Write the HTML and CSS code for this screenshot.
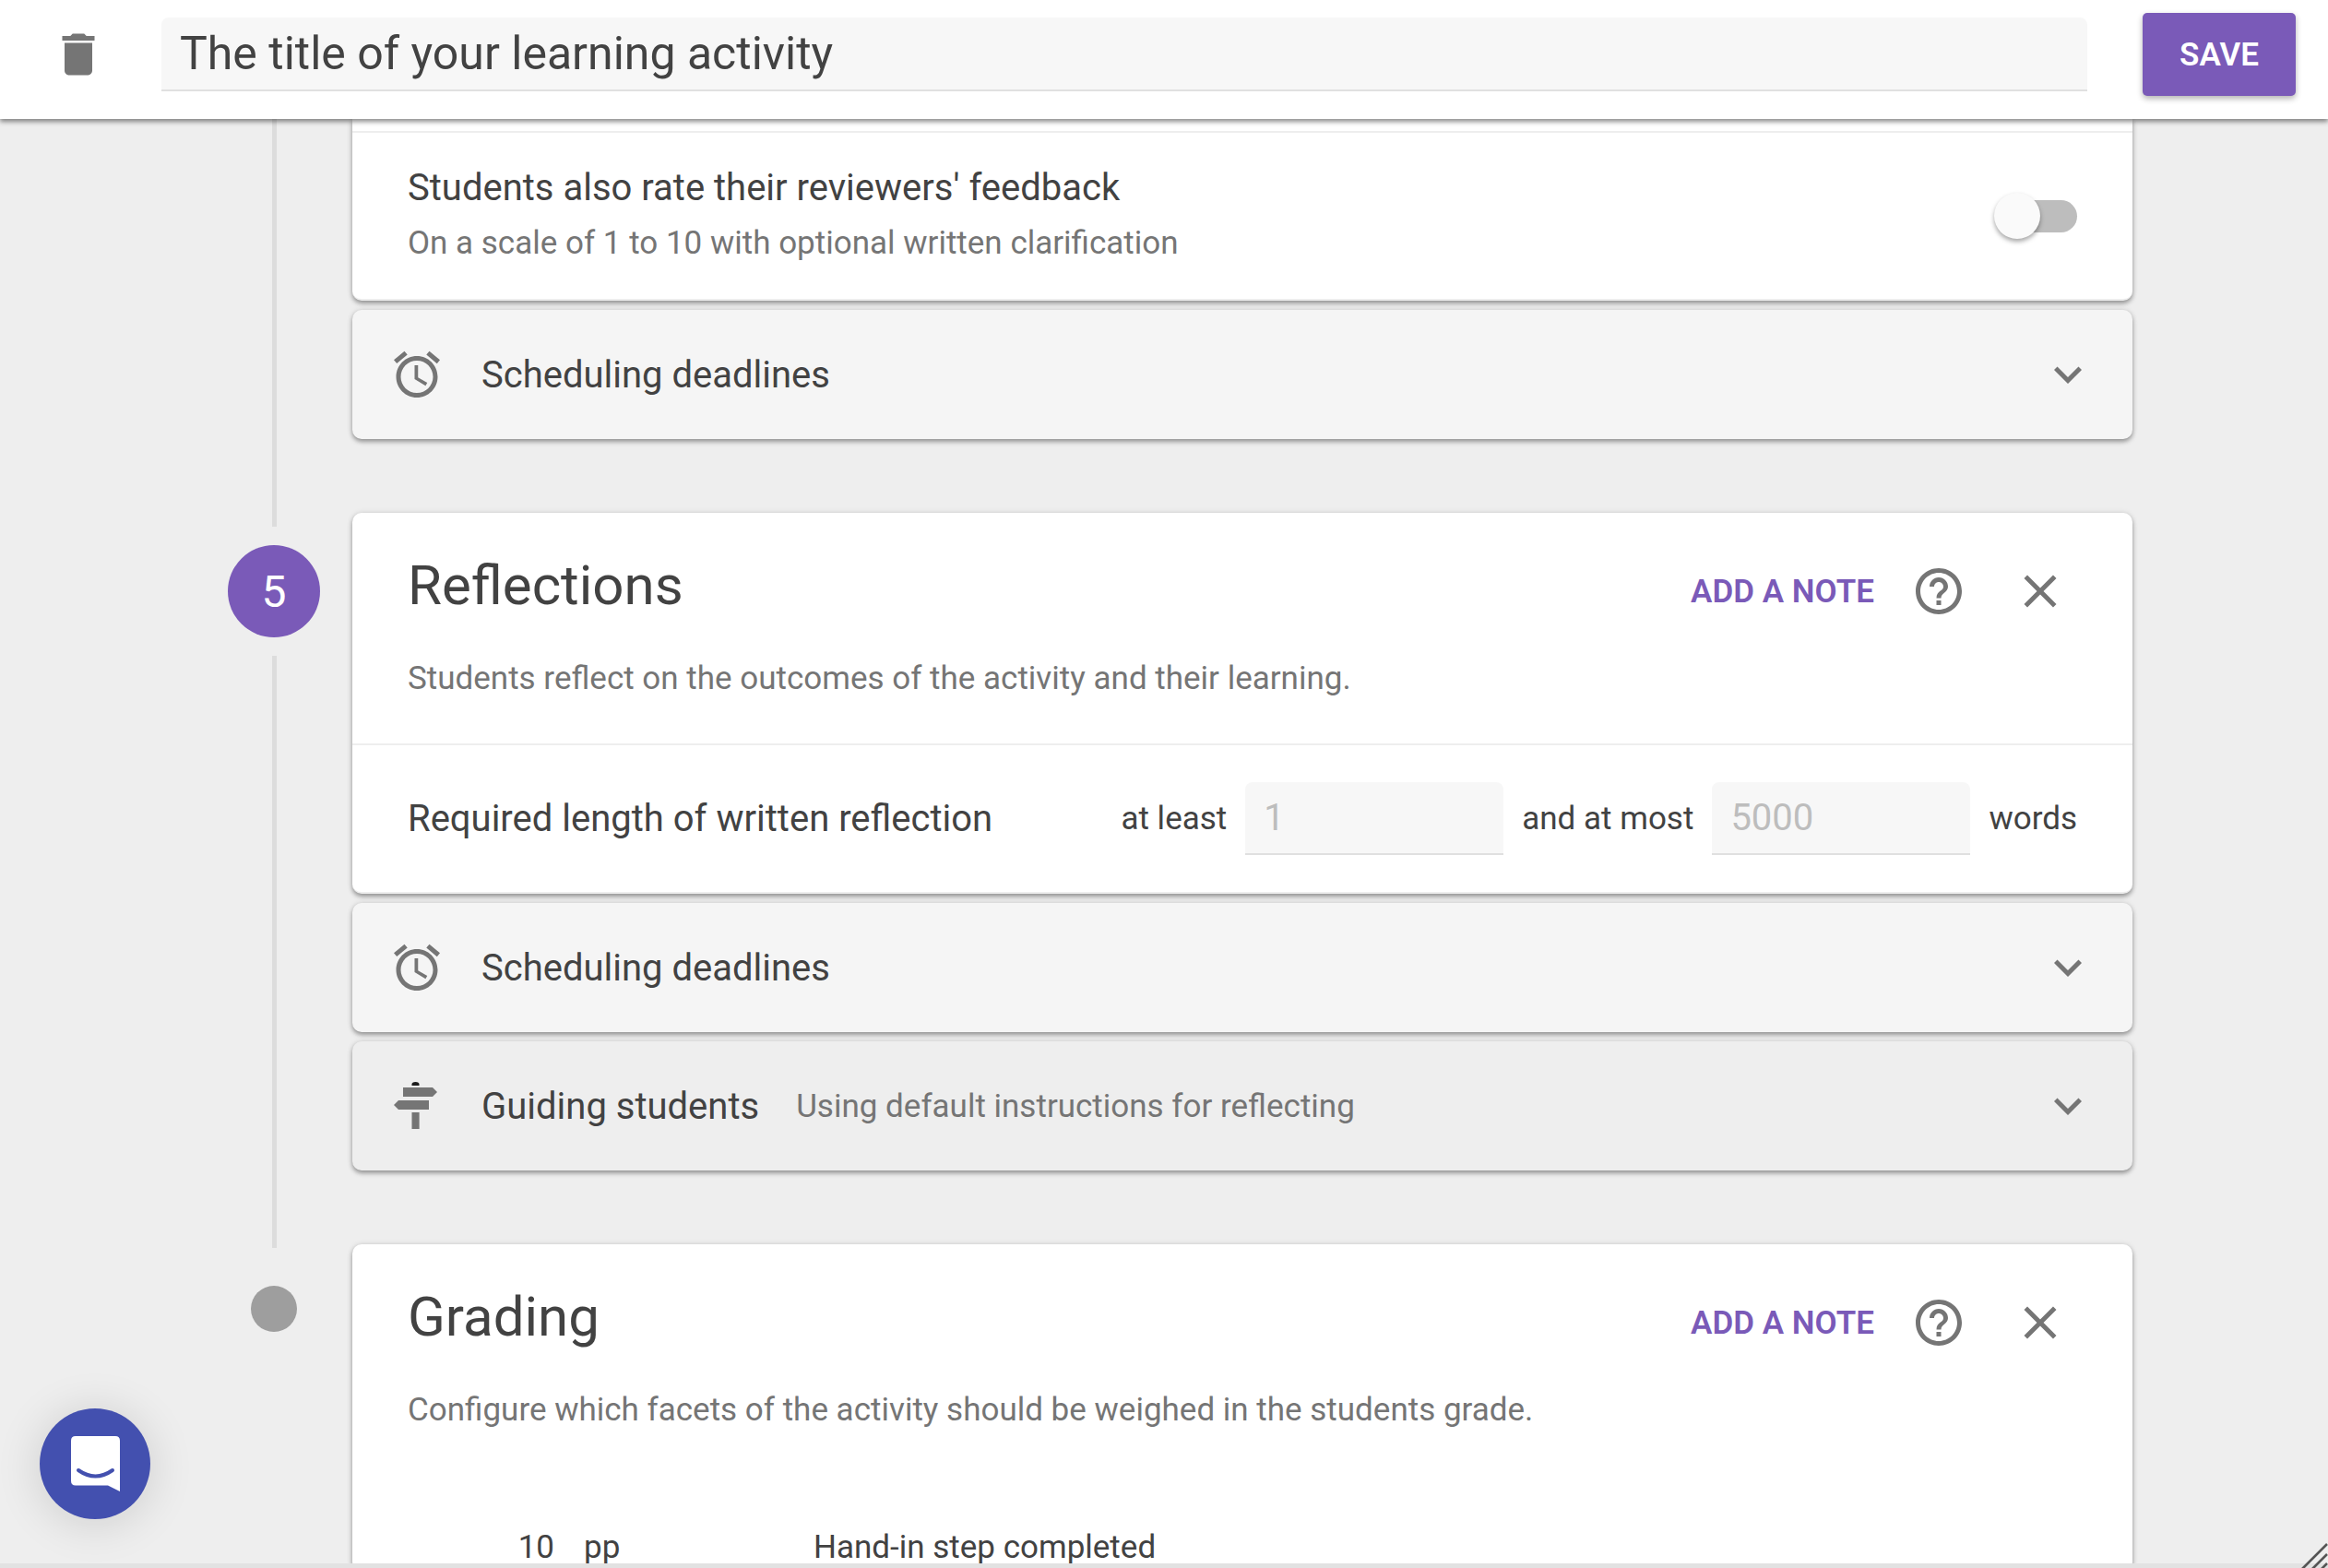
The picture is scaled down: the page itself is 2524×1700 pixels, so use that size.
FILE: index.html
```html
<!DOCTYPE html>
<html lang="en">
<head>
<meta charset="utf-8">
<title>The title of your learning activity</title>
<link rel="stylesheet" href="styles.css">
</head>
<body>
<header class="topbar">
  <svg class="icon trash" viewBox="0 0 24 24"><path d="M6 19c0 1.1.9 2 2 2h8c1.1 0 2-.9 2-2V7H6v12zM19 4h-3.5l-1-1h-5l-1 1H5v2h14V4z"/></svg>
  <input class="title-input" type="text" value="The title of your learning activity" aria-label="Title">
  <button class="save" type="button">SAVE</button>
</header>
<main class="page">
  <section class="step step-cont">
    <div class="rail"><span class="line grow"></span></div>
    <div class="cards">
      <div class="card card-cut">
        <div class="option">
          <div>
            <div class="row-title">Students also rate their reviewers' feedback</div>
            <div class="row-sub">On a scale of 1 to 10 with optional written clarification</div>
          </div>
          <div class="toggle"><span class="thumb"></span></div>
        </div>
      </div>
      <div class="fold">
        <svg class="icon" viewBox="0 0 24 24"><path d="M22 5.72l-4.6-3.86-1.29 1.53 4.6 3.86L22 5.72zM7.88 3.39L6.6 1.86 2 5.71l1.29 1.53 4.59-3.85zM12.5 8H11v6l4.75 2.85.75-1.23-4-2.37V8zM12 4c-4.97 0-9 4.03-9 9s4.03 9 9 9 9-4.03 9-9-4.03-9-9-9zm0 16c-3.87 0-7-3.13-7-7s3.13-7 7-7 7 3.13 7 7-3.13 7-7 7z"/></svg>
        <span class="fold-title">Scheduling deadlines</span>
        <svg class="icon chevron" viewBox="0 0 24 24"><path d="M16.59 8.59L12 13.17 7.41 8.59 6 10l6 6 6-6z"/></svg>
      </div>
    </div>
  </section>

  <section class="step">
    <div class="rail">
      <span class="line stub"></span>
      <span class="badge">5</span>
      <span class="line grow"></span>
    </div>
    <div class="cards">
      <div class="card">
        <div class="card-head">
          <div class="head-top">
            <h2 class="card-title">Reflections</h2>
            <div class="actions">
              <span class="note">ADD A NOTE</span>
              <svg class="icon" viewBox="0 0 24 24"><path d="M11 18h2v-2h-2v2zm1-16C6.48 2 2 6.48 2 12s4.48 10 10 10 10-4.48 10-10S17.52 2 12 2zm0 18c-4.41 0-8-3.59-8-8s3.59-8 8-8 8 3.59 8 8-3.59 8-8 8zm0-14c-2.21 0-4 1.79-4 4h2c0-1.1.9-2 2-2s2 .9 2 2c0 2-3 1.75-3 5h2c0-2.25 3-2.5 3-5 0-2.21-1.79-4-4-4z"/></svg>
              <svg class="icon" viewBox="0 0 24 24"><path d="M19 6.41L17.59 5 12 10.59 6.41 5 5 6.41 10.59 12 5 17.59 6.41 19 12 13.41 17.59 19 19 17.59 13.41 12z"/></svg>
            </div>
          </div>
          <p class="card-desc">Students reflect on the outcomes of the activity and their learning.</p>
        </div>
        <div class="length-row">
          <span class="row-title length-label">Required length of written reflection</span>
          <span class="inline-label">at least</span>
          <input class="num" type="text" value="1" aria-label="At least">
          <span class="inline-label">and at most</span>
          <input class="num" type="text" value="5000" aria-label="At most">
          <span class="inline-label">words</span>
        </div>
      </div>
      <div class="fold">
        <svg class="icon" viewBox="0 0 24 24"><path d="M22 5.72l-4.6-3.86-1.29 1.53 4.6 3.86L22 5.72zM7.88 3.39L6.6 1.86 2 5.71l1.29 1.53 4.59-3.85zM12.5 8H11v6l4.75 2.85.75-1.23-4-2.37V8zM12 4c-4.97 0-9 4.03-9 9s4.03 9 9 9 9-4.03 9-9-4.03-9-9-9zm0 16c-3.87 0-7-3.13-7-7s3.13-7 7-7 7 3.13 7 7-3.13 7-7 7z"/></svg>
        <span class="fold-title">Scheduling deadlines</span>
        <svg class="icon chevron" viewBox="0 0 24 24"><path d="M16.59 8.59L12 13.17 7.41 8.59 6 10l6 6 6-6z"/></svg>
      </div>
      <div class="fold fold-dark">
        <svg class="icon" viewBox="0 0 60 60">
          <path class="cap" d="M24.5 8V6.5Q24.5 4 28.5 4T32.500 6.500V8z"/>
          <path d="M15 10H47L52 15 47 20H15z"/>
          <path d="M10 24H43V34H10L5 29z"/>
          <path d="M24.500 37H32.600V55H24.500z"/>
        </svg>
        <span class="fold-title">Guiding students</span>
        <span class="fold-sub">Using default instructions for reflecting</span>
        <svg class="icon chevron" viewBox="0 0 24 24"><path d="M16.59 8.59L12 13.17 7.41 8.59 6 10l6 6 6-6z"/></svg>
      </div>
    </div>
  </section>

  <section class="step step-last">
    <div class="rail">
      <span class="line tail"></span>
      <span class="dot"></span>
    </div>
    <div class="cards">
      <div class="card">
        <div class="card-head card-head-open">
          <div class="head-top">
            <h2 class="card-title">Grading</h2>
            <div class="actions">
              <span class="note">ADD A NOTE</span>
              <svg class="icon" viewBox="0 0 24 24"><path d="M11 18h2v-2h-2v2zm1-16C6.48 2 2 6.48 2 12s4.48 10 10 10 10-4.48 10-10S17.52 2 12 2zm0 18c-4.41 0-8-3.59-8-8s3.59-8 8-8 8 3.59 8 8-3.59 8-8 8zm0-14c-2.21 0-4 1.79-4 4h2c0-1.1.9-2 2-2s2 .9 2 2c0 2-3 1.75-3 5h2c0-2.25 3-2.5 3-5 0-2.21-1.79-4-4-4z"/></svg>
              <svg class="icon" viewBox="0 0 24 24"><path d="M19 6.41L17.59 5 12 10.59 6.41 5 5 6.41 10.59 12 5 17.59 6.41 19 12 13.41 17.59 19 19 17.59 13.41 12z"/></svg>
            </div>
          </div>
          <p class="card-desc">Configure which facets of the activity should be weighed in the students grade.</p>
        </div>
        <div class="grade-row">
          <span class="grade-num">10</span>
          <span>pp</span>
          <span>Hand-in step completed</span>
        </div>
      </div>
    </div>
  </section>
</main>
<div class="chat">
  <svg class="chat-icon" viewBox="0 0 53 60">
    <path class="chat-bubble" d="M5 0H48Q53 0 53 5V60L40 53.500H5Q0 53.500 0 48.500V5Q0 0 5 0z"/>
    <path class="chat-smile" d="M8 37Q26.500 50 45 37"/>
  </svg>
</div>
<svg class="grip" viewBox="0 0 30 30"><path d="M2 29L29 2M13 29L29 13M23 29L29 23"/></svg>
</body>
</html>
```

FILE: styles.css
```css
* { box-sizing: border-box; }
html, body { margin: 0; padding: 0; }
body {
  width: 2524px;
  height: 1700px;
  display: flex;
  flex-direction: column;
  overflow: hidden;
  background: #eeeeee;
  border-bottom: 5px solid #e2e2e2;
  font-family: Roboto, "Liberation Sans", sans-serif;
  color: #424242;
}
.icon { width: 60px; height: 60px; flex: none; display: block; fill: #757575; }
.cap { fill: #1c1c1c; }

.topbar {
  position: relative;
  z-index: 2;
  height: 129px;
  flex: none;
  display: flex;
  align-items: center;
  padding: 0 35px 11px 55px;
  background: #fff;
  box-shadow: 0 3px 5px rgba(0, 0, 0, .45);
}
.title-input {
  width: 2088px;
  height: 80px;
  margin: 0 60px;
  padding: 0 20px;
  border: 0;
  border-bottom: 2px solid #e0e0e0;
  border-radius: 8px 8px 0 0;
  background: #f7f7f7;
  font: 400 50px Roboto, sans-serif;
  color: #424242;
  outline: 0;
}
.save {
  width: 166px;
  height: 90px;
  border: 0;
  border-radius: 5px;
  background: #7a5ab8;
  color: #fff;
  font: 600 35px Roboto, sans-serif;
  box-shadow: 0 3px 6px rgba(0, 0, 0, .3);
}

.page { flex: 1; min-height: 0; overflow: hidden; }
.step { display: flex; }
.rail {
  flex: none;
  width: 382px;
  padding: 0 35px 0 247px;
  display: flex;
  flex-direction: column;
  align-items: center;
}
.line { width: 5px; background: #dcdcdc; flex: none; }
.line.grow { flex: 1; }
.line.stub { height: 15px; margin-bottom: 20px; }
.line.tail { height: 4px; margin-bottom: 41px; }
.badge {
  width: 100px;
  height: 100px;
  flex: none;
  margin-bottom: 20px;
  border-radius: 50%;
  background: #7a5ab8;
  color: #fff;
  font-size: 48px;
  display: flex;
  align-items: center;
  justify-content: center;
}
.dot { width: 50px; height: 50px; flex: none; border-radius: 50%; background: #9e9e9e; }
.cards {
  width: 1930px;
  padding-bottom: 80px;
  display: flex;
  flex-direction: column;
  gap: 10px;
}
.card, .fold {
  border-radius: 10px;
  box-shadow: 0 3px 5px rgba(0, 0, 0, .35), 0 0 6px rgba(0, 0, 0, .1);
}
.card { background: #fff; border-bottom: 2px solid #eeeeee; }
.card-cut { padding-top: 13px; border-radius: 0 0 10px 10px; }
.step-last .card { border-bottom: 0; }

.option {
  display: flex;
  align-items: center;
  justify-content: space-between;
  padding: 32px 60px 36px;
  border-top: 2px solid #eeeeee;
}
.row-title { font-size: 40px; line-height: 56px; white-space: nowrap; }
.row-sub { margin-top: 7px; margin-bottom: -1px; font-size: 35px; line-height: 50px; color: #757575; white-space: nowrap; }
.toggle { position: relative; width: 90px; height: 50px; flex: none; margin-top: 3px; }
.toggle::before {
  content: "";
  position: absolute;
  left: 20px;
  top: 8px;
  width: 70px;
  height: 35px;
  border-radius: 18px;
  background: #bdbdbd;
}
.thumb {
  position: absolute;
  left: 0;
  top: 0;
  width: 50px;
  height: 50px;
  border-radius: 50%;
  background: #fafafa;
  box-shadow: 0 3px 5px rgba(0, 0, 0, .35);
}

.fold {
  height: 140px;
  display: flex;
  align-items: center;
  padding: 0 40px;
  background: #f5f5f5;
}
.fold-dark { background: #eeeeee; }
.fold-title { margin-left: 40px; font-size: 40px; }
.fold-sub { margin-left: 40px; font-size: 35px; color: #757575; }
.chevron { margin-left: auto; }

.card-head { padding: 46px 60px 45px; border-bottom: 2px solid #eeeeee; }
.card-head-open { border-bottom-color: transparent; }
.head-top { display: flex; justify-content: space-between; align-items: flex-start; padding-right: 10px; }
.card-title { margin: 0; font-size: 60px; line-height: 66px; font-weight: 400; }
.actions { display: flex; align-items: center; gap: 50px; margin-top: 9px; }
.actions .icon:nth-of-type(1) { margin-left: -10px; }
.note { font-size: 35px; font-weight: 600; color: #7a5ab8; }
.card-desc { margin: 40px 0 0; font-size: 35px; line-height: 50px; color: #757575; }

.length-row {
  display: flex;
  align-items: center;
  gap: 20px;
  padding: 40px 60px;
}
.length-label { margin-right: auto; }
.inline-label { font-size: 35px; white-space: nowrap; }
.num {
  width: 280px;
  height: 79px;
  padding: 0 20px;
  border: 0;
  border-bottom: 2px solid #e0e0e0;
  border-radius: 8px 8px 0 0;
  background: #f7f7f7;
  font: 400 40px Roboto, sans-serif;
  color: #bdbdbd;
  outline: 0;
}
.grade-row {
  display: grid;
  grid-template-columns: 159px 217px auto;
  column-gap: 32px;
  padding: 52px 60px 0;
  font-size: 35px;
  line-height: 50px;
}
.grade-num { text-align: right; }

.chat {
  position: fixed;
  left: 43px;
  top: 1527px;
  width: 120px;
  height: 120px;
  border-radius: 50%;
  background: #4350af;
  box-shadow: 0 4px 50px rgba(0, 0, 0, .14);
  display: flex;
  align-items: center;
  justify-content: center;
  z-index: 3;
}
.chat-icon { width: 53px; height: 60px; display: block; }
.chat-bubble { fill: #fff; }
.chat-smile { fill: none; stroke: #4350af; stroke-width: 4; stroke-linecap: round; }
.grip {
  position: fixed;
  left: 2494px;
  top: 1672px;
  width: 30px;
  height: 30px;
  fill: none;
  stroke: #555;
  stroke-width: 2.5;
  z-index: 3;
}
```
